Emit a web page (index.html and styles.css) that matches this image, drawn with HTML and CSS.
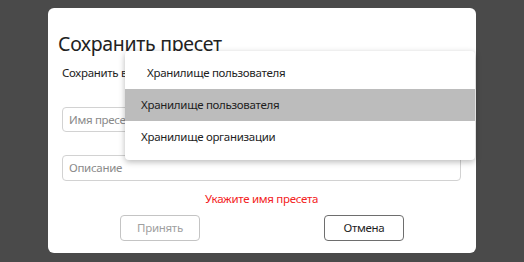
FILE: index.html
```html
<!DOCTYPE html>
<html lang="ru">
<head>
<meta charset="utf-8">
<link rel="stylesheet" href="styles.css">
</head>
<body>
<div class="dialog">
  <div class="title">Сохранить пресет</div>
  <div class="label">Сохранить в</div>
  <div class="field field-name"><span class="placeholder">Имя пресета</span></div>
  <div class="field field-desc"><span class="placeholder">Описание</span></div>
  <div class="error">Укажите имя пресета</div>
  <div class="buttons">
    <div class="btn btn-disabled">Принять</div>
    <div class="btn">Отмена</div>
  </div>
  <div class="popup">
    <div class="item item-first">Хранилище пользователя</div>
    <div class="item item-active">Хранилище пользователя</div>
    <div class="item">Хранилище организации</div>
  </div>
</div>
</body>
</html>
```
FILE: styles.css
```css
html, body {
  margin: 0;
  padding: 0;
  width: 524px;
  height: 262px;
  background: #4a4a4a;
  overflow: hidden;
  font-family: "Noto Sans", "Open Sans", sans-serif;
  color: #1e1e1e;
}
.dialog {
  position: relative;
  margin: 8px 0 0 48px;
  width: 428px;
  height: 245px;
  box-sizing: border-box;
  background: #fff;
  border-radius: 6px;
  padding: 24px 15px 0 14px;
  display: flex;
  flex-direction: column;
  font-size: 11.5px;
  letter-spacing: -0.3px;
}
.title {
  font-size: 19.5px;
  line-height: 24px;
  height: 24px;
  margin-left: -4px;
  white-space: nowrap;
  color: #222;
}
.label {
  line-height: 16px;
  margin-top: 9px;
}
.field {
  box-sizing: border-box;
  height: 25px;
  border: 1px solid #d2d2d2;
  border-radius: 4px;
  padding: 0 6px;
  line-height: 23px;
}
.field-name { margin-top: 26px; }
.field-desc { margin-top: 23px; height: 26px; line-height: 24px; }
.placeholder { color: #8a8a8a; }
.error {
  color: #f32222;
  line-height: 16px;
  text-align: center;
  margin-top: 10px;
}
.buttons {
  display: flex;
  gap: 124px;
  margin-top: 8px;
  padding-left: 58px;
}
.btn {
  box-sizing: border-box;
  width: 80px;
  height: 26px;
  border: 1px solid #6e6e6e;
  border-radius: 4px;
  line-height: 24px;
  text-align: center;
}
.btn-disabled {
  border-color: #c4c4c4;
  color: #a0a0a0;
}
.popup {
  position: absolute;
  left: 77px;
  top: 43px;
  width: 350px;
  height: 109px;
  box-sizing: border-box;
  padding-top: 6px;
  background: #fff;
  border-radius: 4px;
  box-shadow: 0 2px 6px rgba(0, 0, 0, 0.28);
}
.item {
  height: 32px;
  line-height: 32px;
  padding-left: 16px;
  white-space: nowrap;
}
.item-first { padding-left: 22px; }
.item-active { background: #bcbcbc; }
```
